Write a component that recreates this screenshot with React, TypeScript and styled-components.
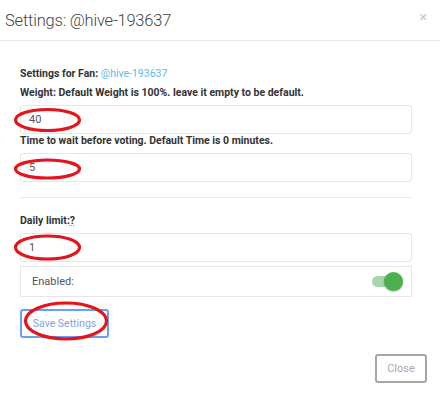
import React from "react";
import styled, { createGlobalStyle } from "styled-components";

const Global = createGlobalStyle`
  html, body { margin: 0; padding: 0; background: #fff; }
  body { font-family: Roboto, "Liberation Sans", Arial, sans-serif; width: 440px; height: 394px; overflow: hidden; }
  * { box-sizing: border-box; }
`;

const Page = styled.div`
  position: relative;
  width: 440px;
  height: 394px;
`;

const Header = styled.div`
  height: 41px;
  display: flex;
  align-items: center;
  justify-content: space-between;
  padding: 0 13px 0 5px;
  border-bottom: 1px solid #e8e8e8;
`;

const Title = styled.h4`
  margin: 0;
  font-size: 16.5px;
  font-weight: 300;
  color: #444;
  letter-spacing: -0.2px;
`;

const CloseX = styled.span`
  font-size: 14px;
  color: #c8c8c8;
  line-height: 1;
  margin-top: -6px;
`;

const Body = styled.div`
  padding: 26px 28px 0 20px;
  display: flex;
  flex-direction: column;
`;

const Label = styled.div<{ $mb?: number }>`
  font-size: 10.5px;
  line-height: 14px;
  font-weight: 700;
  color: #333;
  margin-bottom: ${(p) => p.$mb ?? 5}px;
`;

const Link = styled.span`
  color: #5bbbe6;
  font-weight: 400;
`;

const Hint = styled.abbr`
  text-decoration: underline dotted #999;
  cursor: help;
`;

const Input = styled.div`
  height: 29px;
  border: 1px solid #e6e6e6;
  border-radius: 3px;
  display: flex;
  align-items: center;
  padding-left: 8px;
  font-size: 11px;
  color: #555;
`;

const Divider = styled.hr`
  border: 0;
  border-top: 1px solid #eee;
  margin: 15px 0 16px;
  width: 100%;
`;

const ToggleRow = styled.div`
  margin-top: 4px;
  height: 31px;
  border: 1px solid #e6e6e6;
  display: flex;
  align-items: center;
  justify-content: space-between;
  padding: 0 8px 0 11px;
  font-size: 11px;
  color: #555;
`;

const Switch = styled.div`
  position: relative;
  width: 31px;
  height: 11px;
  border-radius: 6px;
  background: #a8d5aa;
`;

const Knob = styled.div`
  position: absolute;
  right: 0;
  top: -4px;
  width: 19px;
  height: 19px;
  border-radius: 50%;
  background: #4caf50;
  box-shadow: 0 1px 2px rgba(0, 0, 0, 0.25);
`;

const SaveButton = styled.button`
  margin-top: 12px;
  align-self: flex-start;
  width: 89px;
  height: 29px;
  border: 2px solid #6a9ff4;
  border-radius: 3px;
  background: #fff;
  color: #7f9ff0;
  font-family: inherit;
  font-size: 10.5px;
  padding: 0;
`;

const Footer = styled.div`
  display: flex;
  justify-content: flex-end;
  padding: 16px 13px 0 0;
`;

const CloseButton = styled.button`
  width: 52px;
  height: 29px;
  border: 2px solid #a5a5a5;
  border-radius: 3px;
  background: #fff;
  color: #aaa;
  font-family: inherit;
  font-size: 11px;
  padding: 0;
`;

const Marks = styled.svg`
  position: absolute;
  left: 0;
  top: 0;
  pointer-events: none;
`;

export default function App() {
  return (
    <Page>
      <Global />
      <Header>
        <Title>Settings: @hive-193637</Title>
        <CloseX>×</CloseX>
      </Header>
      <Body>
        <Label $mb={5}>
          Settings for Fan: <Link>@hive-193637</Link>
        </Label>
        <Label>Weight: Default Weight is 100%. leave it empty to be default.</Label>
        <Input>40</Input>
        <Label>Time to wait before voting. Default Time is 0 minutes.</Label>
        <Input>5</Input>
        <Divider />
        <Label>
          Daily limit:<Hint title="Daily limit">?</Hint>
        </Label>
        <Input>1</Input>
        <ToggleRow>
          <span>Enabled:</span>
          <Switch>
            <Knob />
          </Switch>
        </ToggleRow>
        <SaveButton>Save Settings</SaveButton>
      </Body>
      <Footer>
        <CloseButton>Close</CloseButton>
      </Footer>
      <Marks width="440" height="394" viewBox="0 0 440 394">
        <g fill="none" stroke="#e3141c" strokeWidth="3.2">
          <ellipse cx="47.5" cy="120" rx="32" ry="10.5" />
          <ellipse cx="47.5" cy="169" rx="32" ry="9" />
          <ellipse cx="47.5" cy="247.5" rx="32" ry="11.5" />
          <ellipse cx="66" cy="321" rx="40.5" ry="18" />
        </g>
      </Marks>
    </Page>
  );
}
